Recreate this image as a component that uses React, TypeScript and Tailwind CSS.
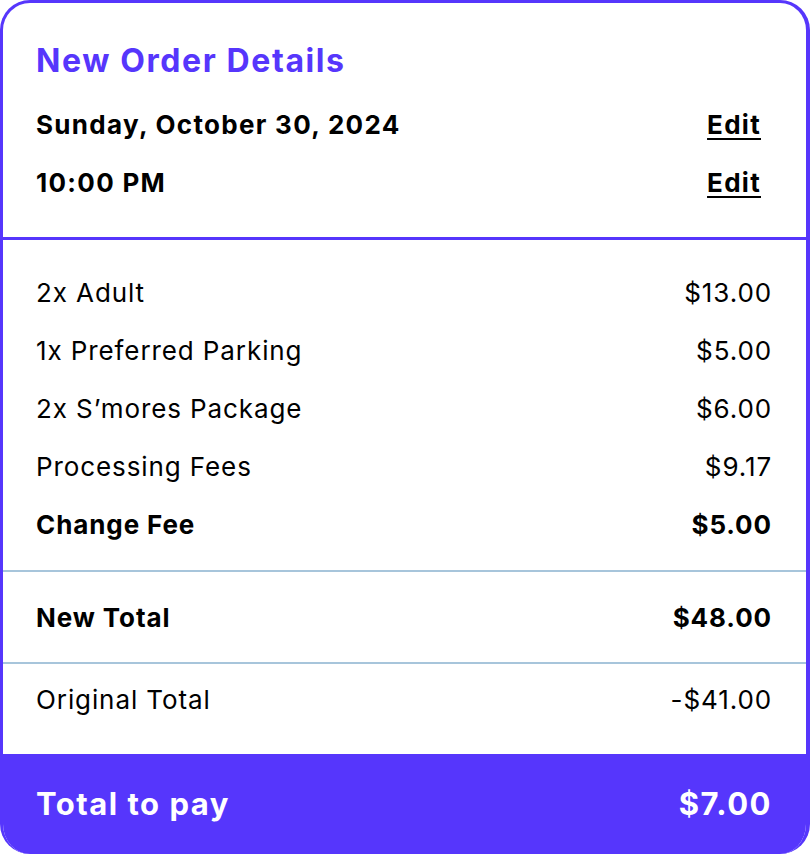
import React from "react";

const font = { fontFamily: "Inter, 'Noto Sans', sans-serif" };

function Row({ label, value, bold }: { label: string; value: string; bold?: boolean }) {
  return (
    <div className={`flex h-[58px] items-center justify-between text-[26px] tracking-[0.9px] text-black ${bold ? "font-bold" : "font-normal"}`}>
      <span>{label}</span>
      <span>{value}</span>
    </div>
  );
}

export default function App() {
  return (
    <div style={font} className="h-[854px] w-[810px] bg-white">
      <div className="flex h-[854px] w-[810px] flex-col overflow-hidden rounded-[30px] border-l-[3px] border-r-[4px] border-t-[3px] border-[#5636fc] bg-white">
        <div className="border-b-[3px] border-[#5636fc] pl-[33px] pr-[45px] pt-[38px] pb-[35px]">
          <div className="h-[40px] text-[32px] font-bold leading-[40px] tracking-[1.6px] text-[#5636fc]">New Order Details</div>
          <div className="mt-[23px] flex h-[40px] items-center justify-between text-[26px] font-bold tracking-[1.3px] text-black">
            <span>Sunday, October 30, 2024</span>
            <a className="underline decoration-2 underline-offset-4">Edit</a>
          </div>
          <div className="mt-[18px] flex h-[40px] items-center justify-between text-[26px] font-bold tracking-[1.3px] text-black">
            <span>10:00 PM</span>
            <a className="underline decoration-2 underline-offset-4">Edit</a>
          </div>
        </div>
        <div className="border-b-2 border-[#a7c5db] pl-[33px] pr-[34px] pt-[23px] pb-[17px]">
          <Row label="2x Adult" value="$13.00" />
          <Row label="1x Preferred Parking" value="$5.00" />
          <Row label="2x S’mores Package" value="$6.00" />
          <Row label="Processing Fees" value="$9.17" />
          <Row label="Change Fee" value="$5.00" bold />
        </div>
        <div className="flex h-[92px] items-center justify-between border-b-2 border-[#a7c5db] pl-[33px] pr-[34px] text-[26px] font-bold tracking-[0.9px] text-black">
          <span>New Total</span>
          <span>$48.00</span>
        </div>
        <div className="flex h-[90px] items-start justify-between pl-[33px] pr-[34px] pt-[16px] text-[26px] leading-[40px] tracking-[0.9px] text-black">
          <span>Original Total</span>
          <span>-$41.00</span>
        </div>
        <div className="-ml-[3px] -mr-[4px] flex flex-1 items-center justify-between bg-[#5636fc] pl-[36px] pr-[38px] text-[31px] font-bold tracking-[1.5px] text-white">
          <span>Total to pay</span>
          <span>$7.00</span>
        </div>
      </div>
    </div>
  );
}
